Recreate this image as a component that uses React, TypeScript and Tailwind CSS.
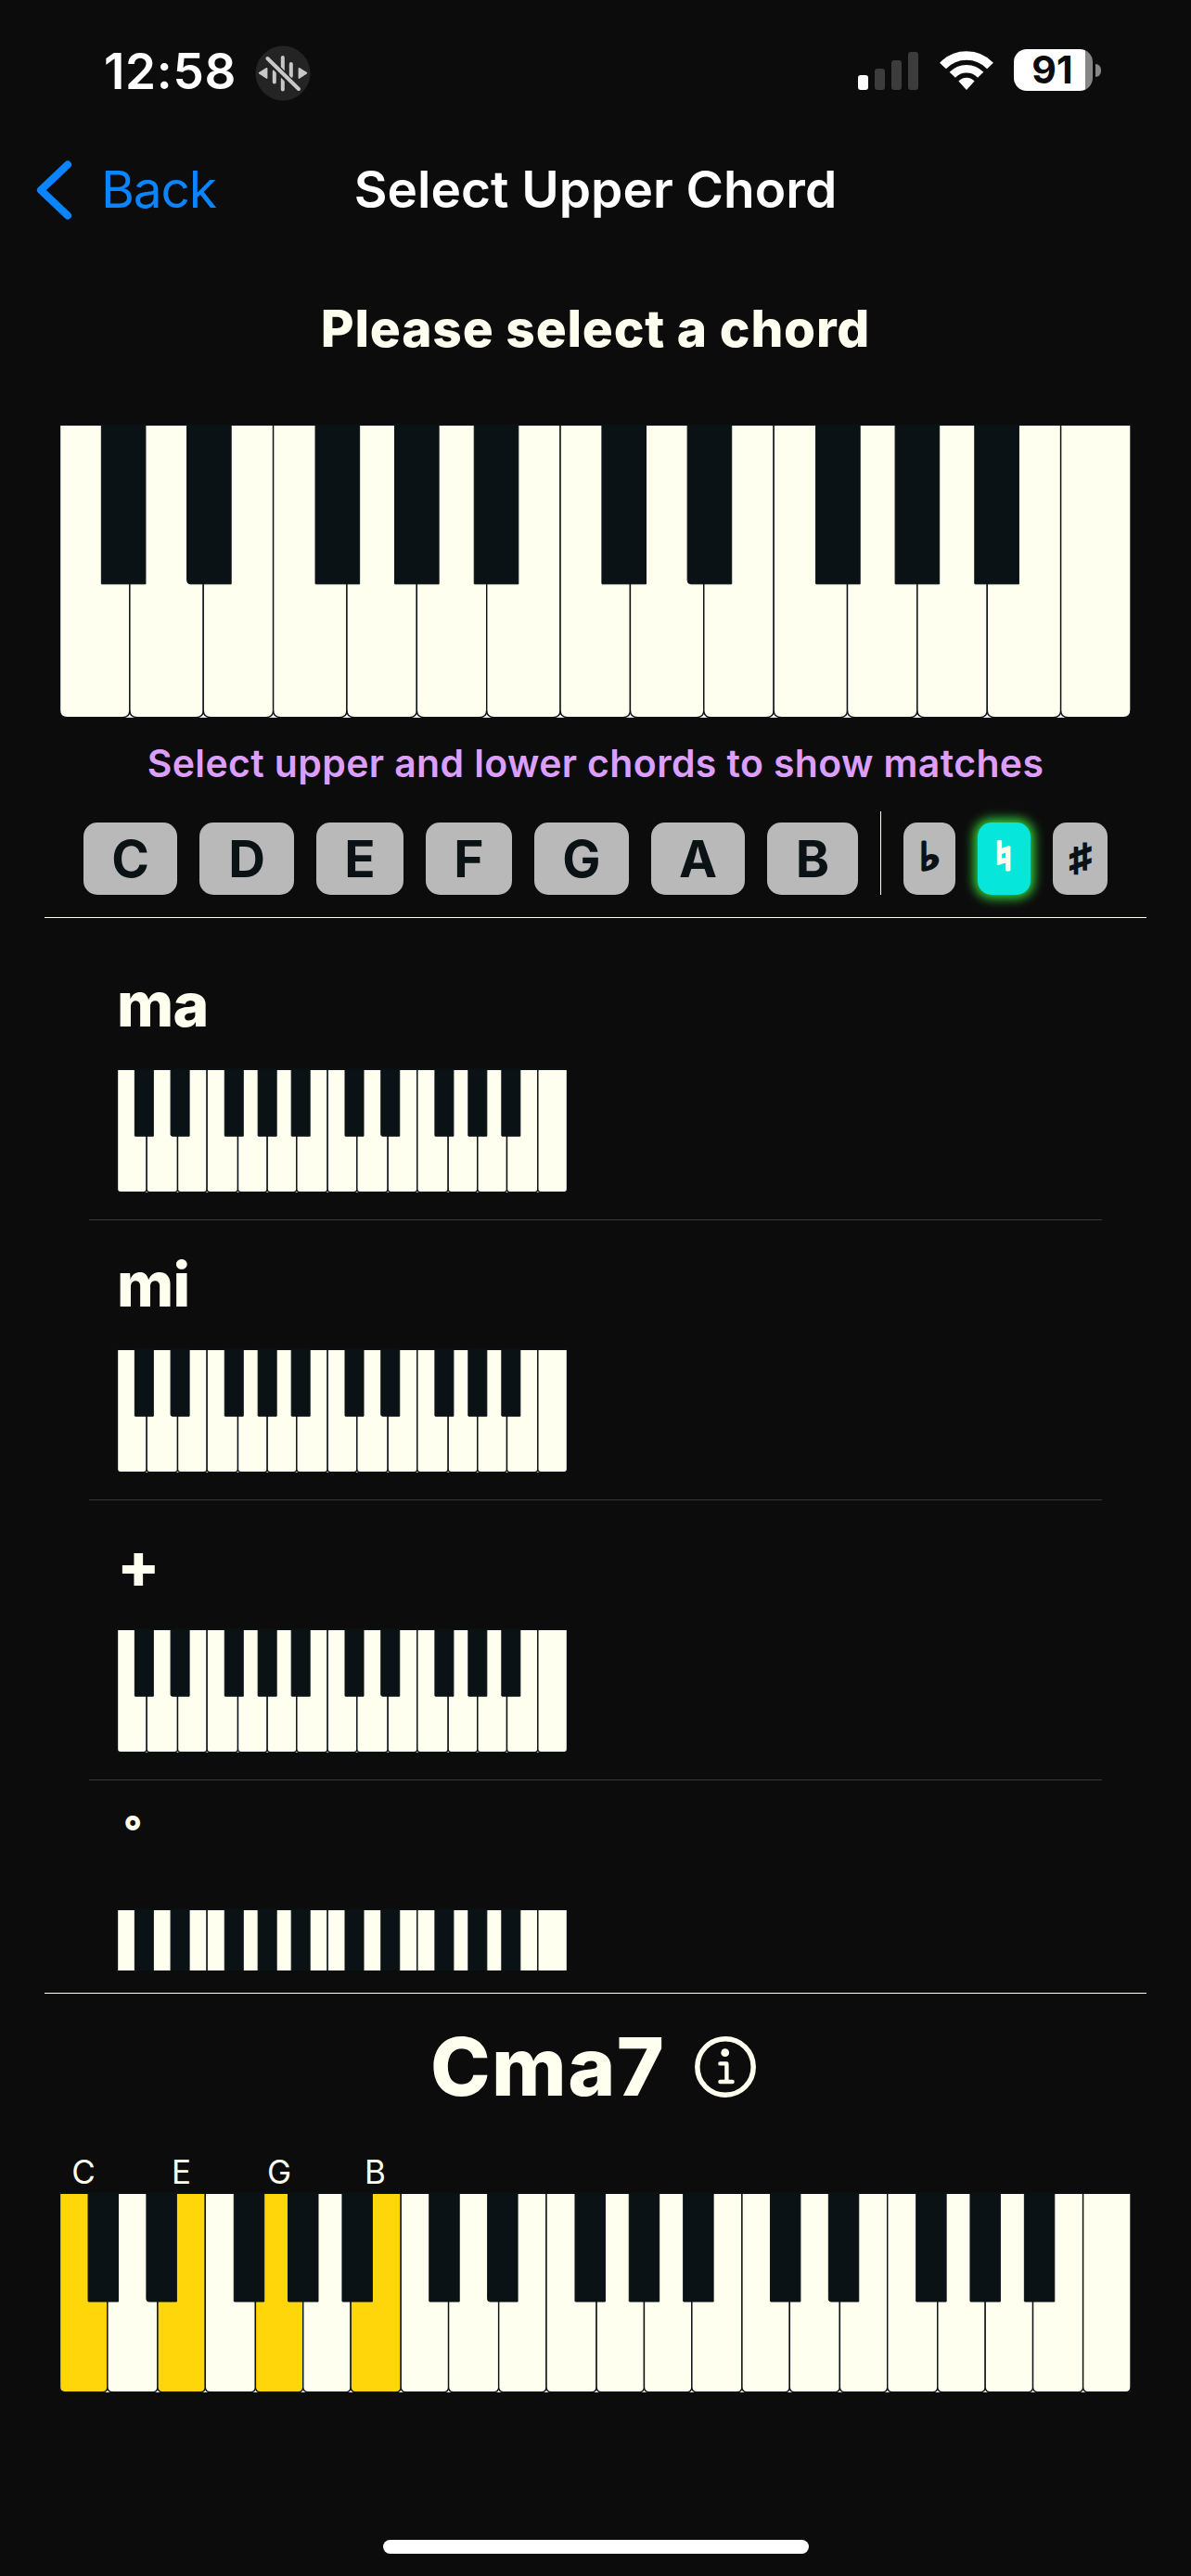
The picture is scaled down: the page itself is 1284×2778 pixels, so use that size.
const WHITE_WIDTHS = [19, 20, 19, 20, 19, 19, 20];
const BLACK_OFFSETS = [11.3, 34.55, 69.45, 91, 112.6];
const OCTAVE = 136;

type KeyboardProps = {
  octaves: number;
  width: number;
  lit?: number[];
};

/** Piano drawing: `octaves` full octaves followed by one closing C key. */
function Keyboard({ octaves, width, lit = [] }: KeyboardProps) {
  const u = width / (octaves * OCTAVE + 19);
  const height = Math.ceil(79.5 * u);
  const whites: { x: number; w: number }[] = [];
  const blacks: { x: number; rounded: boolean }[] = [];
  for (let o = 0; o < octaves; o++) {
    let x = o * OCTAVE;
    for (const w of WHITE_WIDTHS) {
      whites.push({ x: x * u, w: w * u });
      x += w;
    }
    BLACK_OFFSETS.forEach((b, i) => blacks.push({ x: (o * OCTAVE + b) * u, rounded: i === 1 }));
  }
  whites.push({ x: octaves * OCTAVE * u, w: 19 * u });
  const r = 2 * u;
  const h = height - 0.3;
  const bh = 43.3 * u;
  const bw = 12 * u;
  const br = u;

  return (
    <svg width={width + 1} height={height} viewBox={`-0.5 0 ${width + 1} ${height}`} className="block overflow-visible">
      <rect x={r * 2} y={h - r} width={width - r * 4} height={r + 0.2} fill="#ffffff" />
      {whites.map((k, i) => (
        <path
          key={i}
          d={`M${k.x} 0.3H${k.x + k.w}V${h - r}Q${k.x + k.w} ${h} ${k.x + k.w - r} ${h}H${k.x + r}Q${k.x} ${h} ${k.x} ${h - r}Z`}
          fill={lit.includes(i) ? "#ffd60a" : "#fffff0"}
          stroke="#0a1215"
          strokeWidth={1.4}
        />
      ))}
      {blacks.map((k, i) => {
        const corner = k.rounded ? br : 0.5;
        return (
          <path
            key={i}
            d={`M${k.x} 0H${k.x + bw}V${bh}H${k.x + corner}Q${k.x} ${bh} ${k.x} ${bh - corner}Z`}
            fill="#0a1215"
            stroke="#0a1215"
            strokeWidth={1}
          />
        );
      })}
    </svg>
  );
}

function MutedWaveIcon() {
  return (
    <svg width="60" height="60" viewBox="0 0 60 60" className="block">
      <circle cx="30" cy="30" r="29.5" fill="#242424" />
      <g stroke="#c8c8c8" strokeWidth="4" strokeLinecap="round">
        <path d="M20.8 28V39.6M29.8 13V28M29.8 36V47.5M38.8 20V33" />
      </g>
      <path d="M12.6 13.2L47.4 49" stroke="#242424" strokeWidth="8" />
      <path d="M13.4 14L47 47" stroke="#c8c8c8" strokeWidth="4" strokeLinecap="round" />
      <path d="M4.6 29.8L12.6 24.8V35.2ZM55.4 29.8L47.4 24.8V35.2Z" fill="#c8c8c8" stroke="#c8c8c8" strokeWidth="1.6" strokeLinejoin="round" />
    </svg>
  );
}

function WifiIcon() {
  return (
    <svg width="58" height="42" viewBox="0 0 58 42" className="block overflow-visible">
      <path d="M3.5 16A35 35 0 0 1 54.5 16" fill="none" stroke="#fff" strokeWidth="9.4" />
      <path d="M13.8 25.8A20.8 20.8 0 0 1 44.2 25.8" fill="none" stroke="#fff" strokeWidth="8.6" />
      <path d="M29 42L20.4 32.6A11.5 11.5 0 0 1 37.6 32.6Z" fill="#fff" />
    </svg>
  );
}

function StatusBar() {
  return (
    <header className="flex h-[150px] items-center pt-px pl-[112px]">
      <span className="w-[163px] pt-[3px] text-[53px] leading-[60px] font-semibold tracking-[0.7px] text-white">12:58</span>
      <div className="pt-1.5">
        <MutedWaveIcon />
      </div>
      <div className="ml-[590px] flex h-[42px] items-end gap-[7px]">
        <i className="h-4 w-[11px] rounded-[3px] bg-white" />
        <i className="h-[23px] w-[11px] rounded-[3px] bg-[#3c3c3c]" />
        <i className="h-8 w-[11px] rounded-[3px] bg-[#3c3c3c]" />
        <i className="h-[41px] w-[11px] rounded-[3px] bg-[#3c3c3c]" />
      </div>
      <div className="ml-[23px]">
        <WifiIcon />
      </div>
      <div className="ml-[22px] flex items-center gap-[3px]">
        <div className="h-[45px] w-[85px] rounded-[14px] bg-[linear-gradient(to_right,#fff_77px,#868686_77px)] pr-[2px] text-center text-[41px] leading-[45px] font-bold text-[#0c0c0c]">
          91
        </div>
        <i className="h-[14px] w-[6px] rounded-r-full bg-[#868686]" />
      </div>
    </header>
  );
}

function NavBar() {
  return (
    <nav className="grid h-[109px] grid-cols-[1fr_auto_1fr] items-center text-[55px] leading-none">
      <a className="flex items-center pl-[39px] text-[#0a84ff]">
        <svg width="39" height="64" viewBox="0 0 39 64" className="block">
          <path d="M34 4.5L5 32L34 59.5" fill="none" stroke="#0a84ff" strokeWidth="8" strokeLinecap="round" strokeLinejoin="round" />
        </svg>
        <span className="ml-[31px] tracking-[-1.2px]">Back</span>
      </a>
      <h1 className="font-semibold text-white">Select Upper Chord</h1>
      <span />
    </nav>
  );
}

const NOTES = [
  { name: "C", width: "w-[101px]" },
  { name: "D", width: "w-[102px]" },
  { name: "E", width: "w-[94px]" },
  { name: "F", width: "w-[93px]" },
  { name: "G", width: "w-[102px]" },
  { name: "A", width: "w-[101px]" },
  { name: "B", width: "w-[98px]" },
];

const ACCIDENTALS = [
  { name: "♭", box: "w-[56px] bg-[#b9b9b9] text-[#0a1215]", glyph: "text-[41px] scale-x-120 [-webkit-text-stroke:2px_currentColor]" },
  { name: "♮", box: "w-[57px] bg-[#06e6da] text-[#fffff0] shadow-[0_0_12px_4px_#35d43a]", glyph: "text-[42px] scale-x-135 [-webkit-text-stroke:1.5px_currentColor]" },
  { name: "♯", box: "w-[59px] bg-[#b9b9b9] text-[#0a1215]", glyph: "text-[39px] scale-x-120 [-webkit-text-stroke:2px_currentColor]" },
];

function NotePicker() {
  return (
    <div className="mt-[3px] flex h-[90px] items-end gap-6 pl-[90px]">
      {NOTES.map((n) => (
        <button
          key={n.name}
          className={`flex h-[78px] items-center justify-center rounded-[15px] bg-[#b9b9b9] text-[55px] leading-none font-bold text-[#0a1215] ${n.width}`}
        >
          {n.name}
        </button>
      ))}
      <i className="h-full w-px bg-[#fffff0]" />
      {ACCIDENTALS.map((a) => (
        <button key={a.name} className={`flex h-[78px] items-center justify-center rounded-[15px] pb-1.5 font-bold ${a.box}`}>
          <span className={`leading-none ${a.glyph}`}>{a.name}</span>
        </button>
      ))}
    </div>
  );
}

const QUALITIES = [
  { name: "ma", style: "text-[66px] tracking-[-0.7px]" },
  { name: "mi", style: "text-[66px] tracking-[-0.7px]" },
  { name: "+", style: "text-[68px]" },
  { name: "°", style: "relative -top-[15px] left-[7px] text-[44px]" },
];

function ChordList() {
  return (
    <ul className="mt-[23px] h-[1112px] overflow-hidden px-24 pt-px">
      {QUALITIES.map((q) => (
        <li key={q.name} className="h-[302px] border-b border-[#383838] pl-[30px]">
          <div className="flex h-[139px] items-center pb-px font-extrabold">
            <span className={`leading-none ${q.style}`}>{q.name}</span>
          </div>
          <Keyboard octaves={2} width={485} />
        </li>
      ))}
    </ul>
  );
}

function LowerChord() {
  return (
    <section>
      <div className="flex h-[157px] items-center gap-8 pl-[464px]">
        <h2 className="text-[87px] leading-none font-extrabold tracking-[1.4px]">Cma7</h2>
        <svg width="66" height="66" viewBox="0 0 66 66" fill="none" stroke="#fffff0" strokeLinecap="round" strokeLinejoin="round" className="block">
          <circle cx="33" cy="33" r="30.2" strokeWidth="5.5" />
          <circle cx="32.7" cy="17.7" r="4.4" fill="#fffff0" stroke="none" />
          <path d="M27.4 29.4H34.4V49M27.4 49H40.6" strokeWidth="4.4" />
        </svg>
      </div>
      <div className="ml-[64.5px] flex h-[58px] w-[1155px] items-center pt-3 text-center text-[35px] leading-none">
        <span className="w-[51px]">C</span>
        <span className="ml-[54px] w-[52px]">E</span>
        <span className="ml-[54px] w-[51px]">G</span>
        <span className="ml-[51px] w-[54px]">B</span>
      </div>
      <div className="ml-16">
        <Keyboard octaves={3} width={1154.5} lit={[0, 2, 4, 6]} />
      </div>
    </section>
  );
}

export default function App() {
  return (
    <main className="h-[2778px] w-[1284px] overflow-hidden bg-[#0c0c0c] font-['Inter',sans-serif] text-[#fffff0]">
      <StatusBar />
      <NavBar />
      <h2 className="flex h-[191px] items-center justify-center text-[55px] leading-none font-extrabold tracking-[0.8px]">Please select a chord</h2>
      <div className="mt-2 ml-16">
        <Keyboard octaves={2} width={1154.5} />
      </div>
      <p className="flex h-[98px] items-center justify-center text-[41px] leading-none font-semibold tracking-[0.37px] text-[#dc9eff]">
        Select upper and lower chords to show matches
      </p>
      <NotePicker />
      <hr className="mx-12 mt-6 border-t border-[#fffff0]" />
      <ChordList />
      <hr className="mx-12 mt-6 border-t border-[#fffff0]" />
      <LowerChord />
      <div className="mx-auto mt-[159px] h-[15px] w-[459px] rounded-full bg-white" />
    </main>
  );
}
